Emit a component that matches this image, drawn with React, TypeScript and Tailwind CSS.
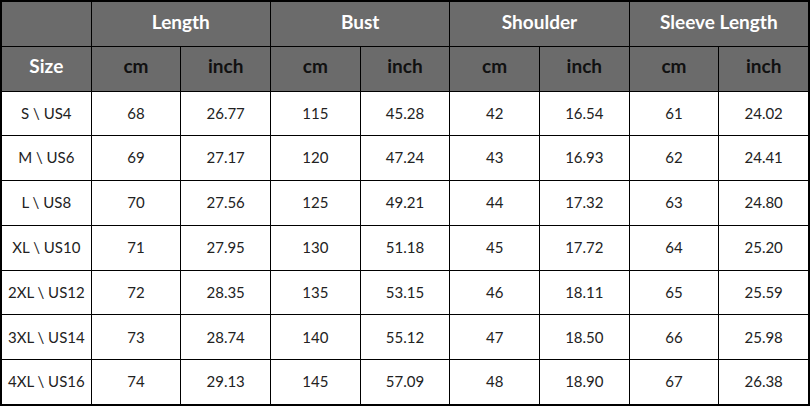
import React from "react";

const rows = [
  ["S \\ US4", "68", "26.77", "115", "45.28", "42", "16.54", "61", "24.02"],
  ["M \\ US6", "69", "27.17", "120", "47.24", "43", "16.93", "62", "24.41"],
  ["L \\ US8", "70", "27.56", "125", "49.21", "44", "17.32", "63", "24.80"],
  ["XL \\ US10", "71", "27.95", "130", "51.18", "45", "17.72", "64", "25.20"],
  ["2XL \\ US12", "72", "28.35", "135", "53.15", "46", "18.11", "65", "25.59"],
  ["3XL \\ US14", "73", "28.74", "140", "55.12", "47", "18.50", "66", "25.98"],
  ["4XL \\ US16", "74", "29.13", "145", "57.09", "48", "18.90", "67", "26.38"],
];

const groups = ["Length", "Bust", "Shoulder", "Sleeve Length"];

export default function App() {
  const head = "flex items-center justify-center bg-[#6b6b6b] font-bold text-[19px] pb-[4px]";
  return (
    <div className="w-[811px] h-[406px] bg-white" style={{ fontFamily: "Lato, 'Open Sans', sans-serif" }}>
      <div className="grid grid-cols-9 grid-rows-9 gap-px bg-black p-[2px] w-[810px] h-[406px]">
        <div className={head}></div>
        {groups.map((g) => (
          <div key={g} className={`${head} col-span-2 text-white`}>{g}</div>
        ))}
        <div className={`${head} text-white`}>Size</div>
        {groups.map((g) => (
          <React.Fragment key={g}>
            <div className={`${head} text-[#111]`}>cm</div>
            <div className={`${head} text-[#111]`}>inch</div>
          </React.Fragment>
        ))}
        {rows.map((r, i) =>
          r.map((c, j) => (
            <div key={`${i}-${j}`} className="flex items-center justify-center bg-white text-[15px] text-[#222] pb-[1px]">
              {c}
            </div>
          ))
        )}
      </div>
    </div>
  );
}
